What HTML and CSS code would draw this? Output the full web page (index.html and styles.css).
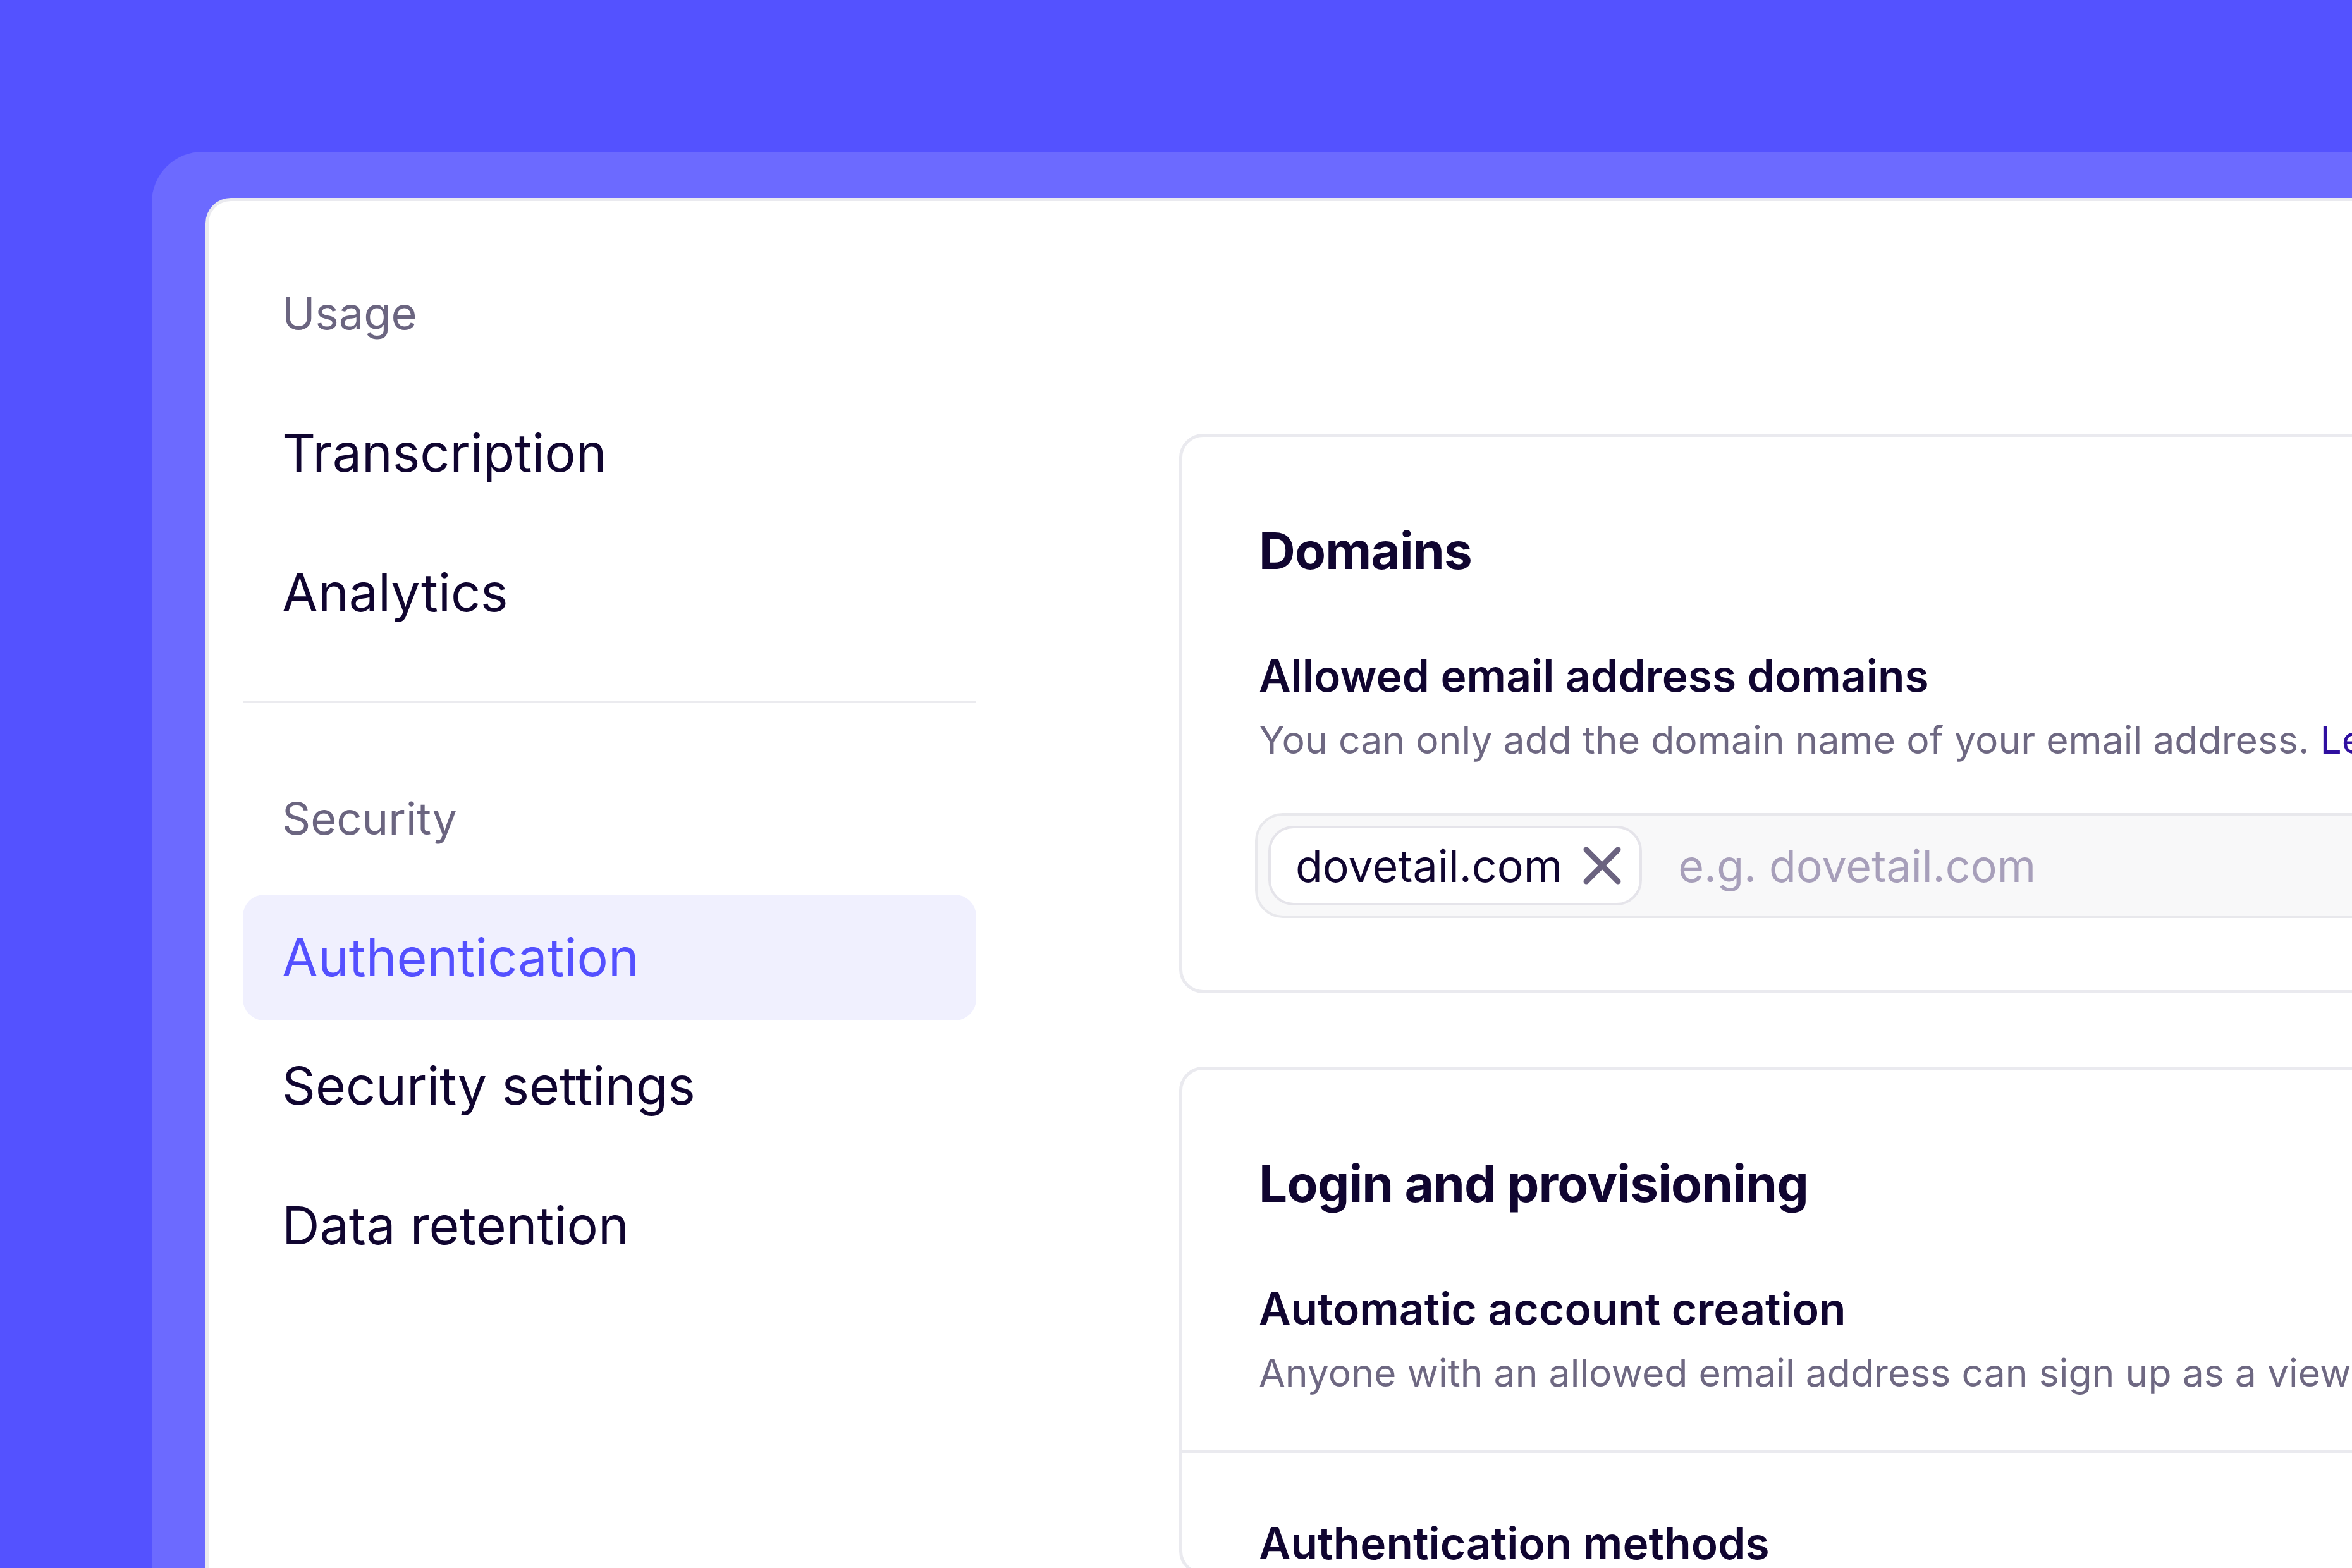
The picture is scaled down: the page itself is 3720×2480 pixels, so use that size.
FILE: index.html
```html
<!DOCTYPE html>
<html lang="en">
<head>
<meta charset="utf-8">
<title>Authentication settings</title>
<link rel="stylesheet" href="styles.css">
</head>
<body>
<div class="frame">
  <div class="panel">
    <nav class="sidebar">
      <div class="nav-group">
        <div class="nav-label">Usage</div>
        <ul class="nav-list">
          <li class="nav-item">Transcription</li>
          <li class="nav-item">Analytics</li>
        </ul>
      </div>
      <hr class="nav-divider">
      <div class="nav-group">
        <div class="nav-label">Security</div>
        <ul class="nav-list">
          <li class="nav-item is-active">Authentication</li>
          <li class="nav-item">Security settings</li>
          <li class="nav-item">Data retention</li>
        </ul>
      </div>
    </nav>
    <main class="content">
      <section class="card card--domains">
        <div class="card-head"><h2 class="card-title">Domains</h2></div>
        <div class="field">
          <h3 class="field-title">Allowed email address domains</h3>
          <p class="field-desc">You can only add the domain name of your email address. <a class="link" href="#">Learn more</a></p>
          <div class="tag-input">
            <span class="chip">
              <span class="chip-text">dovetail.com</span>
              <svg class="chip-x" viewBox="0 0 60 60" width="60" height="60" aria-hidden="true"><path d="M5 5L55 55M55 5L5 55" /></svg>
            </span>
            <span class="placeholder">e.g. dovetail.com</span>
          </div>
        </div>
      </section>
      <section class="card card--login">
        <div class="card-head"><h2 class="card-title">Login and provisioning</h2></div>
        <div class="field field--row">
          <h3 class="field-title">Automatic account creation</h3>
          <p class="field-desc">Anyone with an allowed email address can sign up as a viewer.</p>
        </div>
        <div class="field field--divided">
          <h3 class="field-title">Authentication methods</h3>
        </div>
      </section>
    </main>
  </div>
</div>
</body>
</html>
```
FILE: styles.css
```css
html, body {
  margin: 0;
  padding: 0;
}

body {
  width: 3720px;
  height: 2480px;
  overflow: hidden;
  background: #5452ff;
  font-family: Inter, "Noto Sans", sans-serif;
  color: #100530;
}

.frame {
  box-sizing: border-box;
  margin: 240px 0 0 240px;
  height: 2240px;
  padding: 73px 0 0 85px;
  background: #6c6aff;
  border-top-left-radius: 80px;
  display: flex;
}

.panel {
  flex: 1;
  min-width: 0;
  display: flex;
  align-items: flex-start;
  overflow: hidden;
  background: #ffffff;
  border-top: 5px solid #eaeaef;
  border-left: 5px solid #eaeaef;
  border-top-left-radius: 40px;
}

/* Sidebar */
.sidebar {
  flex: none;
  width: 1160px;
  margin-left: 54px;
  padding-top: 128px;
}

.nav-label {
  height: 100px;
  line-height: 100px;
  padding-left: 62px;
  font-size: 70.5px;
  color: #6b6580;
}

.nav-list {
  list-style: none;
  margin: 70px 0 0;
  padding: 0;
  display: flex;
  flex-direction: column;
  gap: 21px;
}

.nav-item {
  height: 200px;
  line-height: 200px;
  padding-left: 62px;
  font-size: 82.5px;
  color: #100530;
  border-radius: 34px;
}

.nav-item.is-active {
  height: 199px;
  line-height: 199px;
  margin-bottom: -18px;
  background: #f0f0fe;
  color: #5450ff;
}

.nav-divider {
  height: 4px;
  margin: 71px 0 133px;
  border: none;
  background: #ebebef;
}

/* Main content */
.content {
  flex: none;
  margin-left: 321px;
  padding-top: 368px;
  display: flex;
  flex-direction: column;
  gap: 116px;
}

.card {
  box-sizing: border-box;
  width: 2600px;
  background: #ffffff;
  border: 5px solid #eaeaef;
  border-radius: 38px;
}

.card-head {
  padding: 130px 0 0 121px;
}

.card-title {
  margin: 0;
  height: 100px;
  line-height: 100px;
  font-size: 80px;
  font-weight: 700;
  letter-spacing: -0.8px;
  color: #100530;
}

.field {
  padding: 103px 0 0 121px;
}

.card--domains .field {
  padding-bottom: 114px;
}

.field--row {
  padding-bottom: 82px;
}

.field--divided {
  padding-top: 98px;
  border-top: 5px solid #eaeaef;
}

.field-title {
  margin: 0;
  height: 90px;
  line-height: 90px;
  font-size: 69.5px;
  font-weight: 600;
  color: #100530;
  white-space: nowrap;
}

.field-desc {
  margin: 16px 0 0;
  height: 80px;
  line-height: 80px;
  font-size: 60.7px;
  color: #6e6882;
  white-space: nowrap;
}

.link {
  color: #2f0fa0;
  text-decoration: none;
}

.tag-input {
  box-sizing: border-box;
  width: 2400px;
  height: 166px;
  margin: 76px 0 0 -6px;
  padding: 0 17px;
  display: flex;
  align-items: center;
  gap: 57px;
  background: #f8f8f9;
  border: 4px solid #e8e8ec;
  border-radius: 44px;
}

.chip {
  box-sizing: border-box;
  height: 126px;
  padding: 0 29px 0 39px;
  display: flex;
  align-items: center;
  gap: 33px;
  background: #ffffff;
  border: 4px solid #e5e4ea;
  border-radius: 40px;
  font-size: 70px;
  color: #100530;
}

.chip-x {
  display: block;
  width: 60px;
  height: 60px;
  fill: none;
  stroke: #6b6380;
  stroke-width: 9;
  stroke-linecap: round;
}

.placeholder {
  font-size: 70px;
  color: #a79fba;
}
```
